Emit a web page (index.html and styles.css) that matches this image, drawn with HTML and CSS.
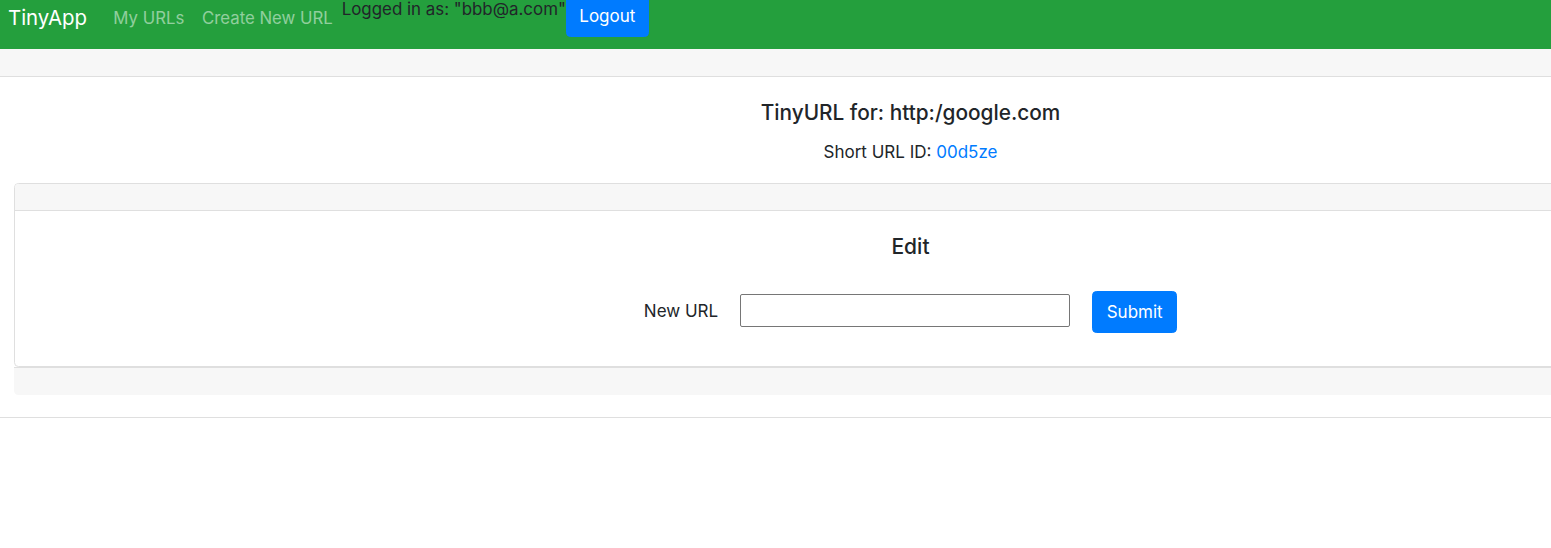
FILE: index.html
```html
<!DOCTYPE html>
<html lang="en">
<head>
<meta charset="utf-8">
<title>TinyApp</title>
<link rel="stylesheet" href="styles.css">
</head>
<body>
<nav class="navbar">
  <a class="brand" href="#">TinyApp</a>
  <ul class="nav">
    <li><a class="nav-link" href="#">My URLs</a></li>
    <li><a class="nav-link" href="#">Create New URL</a></li>
  </ul>
  <div class="user">
    <span class="user-text">Logged in as: "bbb@a.com"</span>
    <button class="btn btn-logout" type="button">Logout</button>
  </div>
</nav>
<div class="card outer">
  <div class="card-header outer-header"></div>
  <div class="card-body outer-body">
    <h3 class="title">TinyURL for: http:/google.com</h3>
    <p class="short">Short URL ID: <a href="#">00d5ze</a></p>
    <div class="card inner">
      <div class="card-header inner-header"></div>
      <div class="card-body inner-body">
        <h3 class="edit">Edit</h3>
        <form class="edit-form">
          <label class="label" for="newurl">New URL</label>
          <input class="input" id="newurl" type="text">
          <button class="btn btn-submit" type="submit">Submit</button>
        </form>
      </div>
    </div>
    <div class="card-footer inner-footer"></div>
  </div>
</div>
</body>
</html>
```

FILE: styles.css
```css
* { box-sizing: border-box; }
html, body { margin: 0; padding: 0; }
body {
  font-family: Inter, "Noto Sans", "Liberation Sans", sans-serif;
  font-size: 17px;
  line-height: 1.5;
  color: #212529;
  background: #fff;
  width: 1821px;
}
a { text-decoration: none; }

.navbar {
  display: flex;
  align-items: flex-start;
  height: 49px;
  background: #249f3d;
  padding-left: 8px;
}
.brand {
  color: #fff;
  font-size: 20.4px;
  line-height: 33px;
  margin-top: 1px;
  margin-right: 17.6px;
}
.nav {
  display: flex;
  list-style: none;
  margin: 5px 0 0;
  padding: 0;
}
.nav-link {
  display: block;
  padding: 0 8.8px;
  font-size: 16.8px;
  line-height: 26.4px;
  color: rgba(255, 255, 255, 0.5);
}
.user {
  display: flex;
  align-items: flex-start;
  margin-top: -5px;
}
.user-text {
  font-size: 16.9px;
  line-height: 26.4px;
  margin-top: 1px;
  color: #212529;
}
.btn {
  font-family: inherit;
  font-size: 17px;
  line-height: 26.4px;
  border: 1px solid #007bff;
  background: #007bff;
  color: #fff;
  border-radius: 4.4px;
  cursor: pointer;
}
.btn-logout { width: 83px; height: 42px; padding: 6.6px 0; }

.card {
  background: #fff;
}
.outer {
  border-bottom: 1px solid #dfdfdf;
}
.card-header {
  background: #f7f7f7;
  border-bottom: 1px solid #dfdfdf;
}
.outer-header { height: 28px; }
.outer-body {
  padding: 21px 14px 22px;
  text-align: center;
}
.title {
  font-size: 20.8px;
  font-weight: 500;
  line-height: 30px;
  margin: 0 0 11px;
}
.short {
  margin: 0 0 18px;
  line-height: 26px;
}
.short a { color: #007bff; }

.inner {
  border: 1px solid #dfdfdf;
  border-radius: 4.4px;
  overflow: hidden;
}
.inner-header { height: 27px; }
.inner-body {
  padding: 23px 0 33px;
}
.edit {
  font-size: 21px;
  font-weight: 500;
  line-height: 26px;
  margin: 0 0 31px;
}
.edit-form {
  display: flex;
  align-items: center;
  justify-content: center;
}
.label { margin-right: 22px; }
.input {
  align-self: flex-start;
  margin-top: 3px;
  width: 330px;
  height: 33px;
  border: 1px solid #767676;
  border-radius: 2px;
  font-family: inherit;
  font-size: 15px;
  padding: 1px 4px;
}
.btn-submit {
  margin-left: 22px;
  width: 85px;
  height: 42px;
  padding: 6.6px 0;
}
.inner-footer {
  height: 28px;
  background: #f7f7f7;
  border-top: 1px solid #dfdfdf;
  border-radius: 0 0 4.4px 4.4px;
}
```
